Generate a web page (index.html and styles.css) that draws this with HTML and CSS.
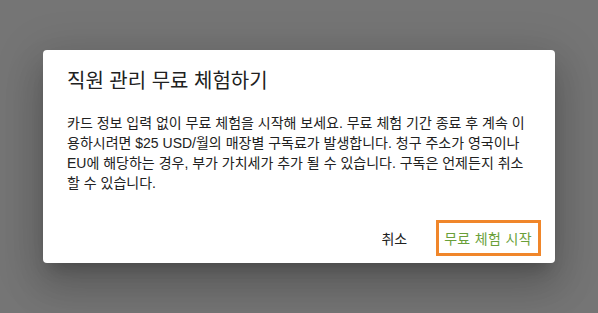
FILE: index.html
```html
<!DOCTYPE html>
<html lang="ko">
<head>
<meta charset="utf-8">
<link rel="stylesheet" href="styles.css">
</head>
<body>
<div class="overlay">
  <div class="dialog" role="dialog">
    <h2 class="dialog-title">직원 관리 무료 체험하기</h2>
    <div class="dialog-content">카드 정보 입력 없이 무료 체험을 시작해 보세요. 무료 체험 기간 종료 후 계속 이용하시려면 $25 USD/월의 매장별 구독료가 발생합니다. 청구 주소가 영국이나 EU에 해당하는 경우, 부가 가치세가 추가 될 수 있습니다. 구독은 언제든지 취소할 수 있습니다.</div>
    <div class="dialog-actions">
      <button class="btn btn-cancel">취소</button>
      <button class="btn btn-primary">무료 체험 시작</button>
    </div>
  </div>
</div>
</body>
</html>
```

FILE: styles.css
```css
html, body {
  margin: 0;
  padding: 0;
  height: 100%;
}
body {
  background: #757575;
  font-family: "Liberation Sans", "Noto Sans CJK KR", sans-serif;
  color: rgba(0, 0, 0, 0.87);
}
.overlay {
  height: 100vh;
  display: flex;
  align-items: center;
  justify-content: center;
}
.dialog {
  width: 512px;
  background: #fff;
  border-radius: 4px;
  box-shadow: 0 11px 15px -7px rgba(0,0,0,.2), 0 24px 38px 3px rgba(0,0,0,.14), 0 9px 46px 8px rgba(0,0,0,.12);
  display: flex;
  flex-direction: column;
}
.dialog-title {
  margin: 0;
  padding: 15px 24px 0;
  font-size: 20px;
  line-height: 32px;
  font-weight: 400;
  color: #212121;
}
.dialog-content {
  padding: 16px 24px 19px;
  font-size: 14px;
  line-height: 20px;
  color: #212121;
}
.dialog-actions {
  display: flex;
  justify-content: flex-end;
  align-items: center;
  padding: 8px 14px 7px 8px;
  gap: 21px;
}
.btn {
  font-family: inherit;
  font-size: 14px;
  background: transparent;
  border: 0;
  height: 36px;
  padding: 0 8px;
  cursor: pointer;
  color: #212121;
}
.btn-primary {
  border: 3px solid #f0862a;
  padding: 0 6px 0 5px;
  letter-spacing: 0.35px;
  color: #6a9f3a;
}
```
